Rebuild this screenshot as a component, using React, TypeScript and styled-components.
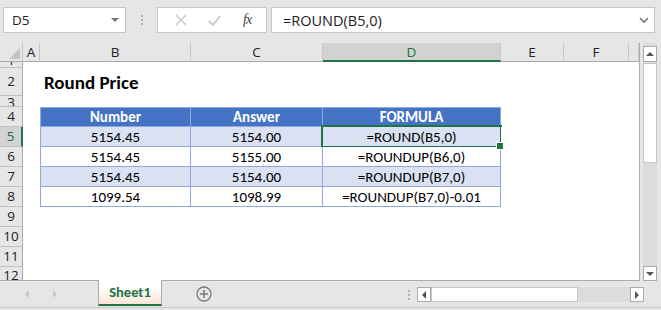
import React from 'react';
import styled, { createGlobalStyle } from 'styled-components';

const COLS = '23px 17px 151px 132px 178px 63px 65px 10px';
const UI_FONT = '"Open Sans", "Noto Sans", "DejaVu Sans", sans-serif';
const CELL_FONT = 'Calibri, Carlito, "Open Sans", "Liberation Sans", sans-serif';
const GREEN = '#217346';
const TABLE_LINE = '#8ea9db';

const GlobalStyle = createGlobalStyle`
  html, body {
    margin: 0;
    padding: 0;
    background: #e6e6e6;
  }
  * {
    box-sizing: border-box;
  }
`;

const Window = styled.div`
  width: 661px;
  height: 310px;
  display: flex;
  flex-direction: column;
  background: #e6e6e6;
  overflow: hidden;
  font-family: ${UI_FONT};
`;

const FormulaBar = styled.div`
  height: 43px;
  display: flex;
  align-items: flex-start;
  padding: 7px 6px 0 3px;
`;

const Box = styled.div<{ $w?: number }>`
  height: 26px;
  background: #fff;
  border: 1px solid #c6c6c6;
  display: flex;
  align-items: center;
  ${p => (p.$w ? `width: ${p.$w}px;` : 'flex: 1;')}
`;

const NameText = styled.span`
  flex: 1;
  padding-left: 8px;
  font-size: 13.5px;
  color: #222;
`;

const FormulaText = styled.span`
  flex: 1;
  padding-left: 11px;
  font-size: 14.5px;
  color: #222;
`;

const Grip = styled.div`
  width: 31px;
  height: 26px;
  display: flex;
  flex-direction: column;
  align-items: center;
  justify-content: center;
  gap: 2px;
  i {
    width: 2px;
    height: 2px;
    background: #b4b4b4;
  }
`;

const IconBox = styled(Box)`
  justify-content: space-around;
  padding: 0 4px 0 6px;
  margin-right: 4px;
`;

const Fx = styled.span`
  font-family: "Liberation Serif", "DejaVu Serif", serif;
  font-style: italic;
  font-size: 14px;
  color: #444;
  letter-spacing: -1px;
`;

const Middle = styled.div`
  display: flex;
  height: 238px;
`;

const Sheet = styled.div`
  width: 640px;
  background: #fff;
  border-right: 1px solid #ababab;
  border-bottom: 1px solid #ababab;
  overflow: hidden;
`;

const Row = styled.div<{ $h: number }>`
  display: grid;
  grid-template-columns: ${COLS};
  height: ${p => p.$h}px;
`;

const ColHead = styled.div<{ $active?: boolean }>`
  height: 19px;
  display: flex;
  align-items: center;
  justify-content: center;
  font-size: 13.5px;
  color: ${p => (p.$active ? GREEN : '#222')};
  background: ${p => (p.$active ? '#d2d2d2' : '#e6e6e6')};
  border-right: 1px solid #c8c8c8;
  border-bottom: ${p => (p.$active ? `2px solid ${GREEN}` : '1px solid #ababab')};
  position: relative;
  overflow: hidden;
`;

const CornerMark = styled.svg`
  position: absolute;
  right: 2px;
  bottom: 2px;
`;

const RowHead = styled.div<{ $active?: boolean; $align?: string }>`
  display: flex;
  align-items: ${p => p.$align ?? 'center'};
  justify-content: center;
  overflow: hidden;
  font-size: 13.5px;
  line-height: 1;
  color: ${p => (p.$active ? GREEN : '#222')};
  background: ${p => (p.$active ? '#d2d2d2' : '#e6e6e6')};
  border-bottom: 1px solid #c0c0c0;
  border-right: ${p => (p.$active ? `2px solid ${GREEN}` : '1px solid #ababab')};
`;

type Kind = 'none' | 'head' | 'band' | 'plain';

const Cell = styled.div<{ $kind?: Kind; $left?: boolean; $top?: boolean; $sel?: boolean }>`
  display: flex;
  align-items: center;
  justify-content: center;
  position: relative;
  white-space: nowrap;
  font-family: ${CELL_FONT};
  font-size: 15px;
  color: ${p => (p.$kind === 'head' ? '#fff' : '#000')};
  font-weight: ${p => (p.$kind === 'head' ? 700 : 400)};
  background: ${p =>
    p.$kind === 'head' ? '#4472c4' : p.$kind === 'band' ? '#d9e1f2' : '#fff'};
  ${p =>
    p.$kind && p.$kind !== 'none'
      ? `border-right: 1px solid ${TABLE_LINE}; border-bottom: 1px solid ${TABLE_LINE};`
      : ''}
  ${p => (p.$left ? `border-left: 1px solid ${TABLE_LINE};` : '')}
  ${p => (p.$top ? `border-top: 1px solid ${TABLE_LINE};` : '')}
  ${p =>
    p.$sel
      ? `&::after {
          content: '';
          position: absolute;
          left: -2px; top: -2px; right: -2px; bottom: -2px;
          border: 2px solid ${GREEN};
        }
        &::before {
          content: '';
          position: absolute;
          right: -4px; bottom: -4px;
          width: 6px; height: 6px;
          background: ${GREEN};
          border: 1px solid #fff;
          z-index: 2;
        }`
      : ''}
`;

const Title = styled.div`
  grid-column: 3 / span 3;
  display: flex;
  align-items: center;
  padding-left: 4px;
  font-family: ${CELL_FONT};
  font-weight: 700;
  font-size: 19px;
  color: #000;
`;

const VScroll = styled.div`
  width: 14px;
  margin: 0 0 0 3px;
  display: flex;
  flex-direction: column;
  background: #dcdcdc;
  padding-top: 3px;
`;

const ScrollBtn = styled.div<{ $h?: number }>`
  width: 14px;
  height: ${p => p.$h ?? 14}px;
  background: #fff;
  border: 1px solid #ababab;
  display: flex;
  align-items: center;
  justify-content: center;
  flex-shrink: 0;
`;

const VThumb = styled.div`
  height: 100px;
  background: #fff;
  border: 1px solid #c6c6c6;
  margin-top: 1px;
`;

const Spacer = styled.div`
  flex: 1;
`;

const TabBar = styled.div`
  height: 27px;
  display: flex;
  align-items: stretch;
  border-bottom: 1px solid #c8c8c8;
`;

const Nav = styled.div`
  width: 98px;
  display: flex;
  align-items: center;
  padding-left: 24px;
  gap: 22px;
`;

const SheetTab = styled.div`
  width: 64px;
  margin-top: -1px;
  display: flex;
  align-items: center;
  justify-content: center;
  font-family: ${CELL_FONT};
  font-weight: 700;
  font-size: 14.5px;
  color: ${GREEN};
  background: linear-gradient(#ffffff 30%, #fbe5d6);
  border-left: 1px solid #ababab;
  border-right: 1px solid #ababab;
  border-bottom: 2px solid ${GREEN};
  margin-bottom: 1px;
`;

const AddSheet = styled.div`
  width: 84px;
  display: flex;
  align-items: center;
  justify-content: center;
`;

const BottomGrip = styled(Grip)`
  width: 17px;
  height: 27px;
  margin-left: 154px;
`;

const HScroll = styled.div`
  width: 227px;
  height: 15px;
  margin-top: 6px;
  display: flex;
  background: #dcdcdc;
`;

const HThumb = styled.div`
  width: 147px;
  background: #fff;
  border: 1px solid #c6c6c6;
`;

const Tri = ({ dir, c = '#444' }: { dir: 'up' | 'down' | 'left' | 'right'; c?: string }) => {
  const pts = {
    up: '0,5 4,1 8,5',
    down: '0,1 8,1 4,5',
    left: '5,0 5,8 1,4',
    right: '1,0 1,8 5,4',
  }[dir];
  const w = dir === 'up' || dir === 'down' ? 8 : 6;
  const h = dir === 'up' || dir === 'down' ? 6 : 8;
  return (
    <svg width={w} height={h} viewBox={`0 0 ${w} ${h}`}>
      <polygon points={pts} fill={c} />
    </svg>
  );
};

const COL_LETTERS = ['A', 'B', 'C', 'D', 'E', 'F', ''];

const DATA = [
  ['5154.45', '5154.00', '=ROUND(B5,0)'],
  ['5154.45', '5155.00', '=ROUNDUP(B6,0)'],
  ['5154.45', '5154.00', '=ROUNDUP(B7,0)'],
  ['1099.54', '1098.99', '=ROUNDUP(B7,0)-0.01'],
];

const EmptyCells = ({ n }: { n: number }) => (
  <>
    {Array.from({ length: n }).map((_, i) => (
      <Cell key={i} />
    ))}
  </>
);

export default function App() {
  return (
    <>
      <GlobalStyle />
      <Window>
        <FormulaBar>
          <Box $w={123}>
            <NameText>D5</NameText>
            <span style={{ paddingRight: 6, display: 'flex' }}>
              <Tri dir="down" c="#777" />
            </span>
          </Box>
          <Grip>
            <i />
            <i />
            <i />
          </Grip>
          <IconBox $w={110}>
            <svg width="12" height="12" viewBox="0 0 12 12">
              <path d="M1 1 L11 11 M11 1 L1 11" stroke="#c4c4c4" strokeWidth="1.4" />
            </svg>
            <svg width="13" height="11" viewBox="0 0 13 11">
              <path d="M1 6 L5 10 L12 1" stroke="#c4c4c4" strokeWidth="1.6" fill="none" />
            </svg>
            <Fx>fx</Fx>
          </IconBox>
          <Box>
            <FormulaText>=ROUND(B5,0)</FormulaText>
            <svg width="10" height="7" viewBox="0 0 10 7" style={{ marginRight: 5 }}>
              <path d="M1 1 L5 5 L9 1" stroke="#777" strokeWidth="1.6" fill="none" />
            </svg>
          </Box>
        </FormulaBar>

        <Middle>
          <Sheet>
            <Row $h={19}>
              <ColHead>
                <CornerMark width="11" height="11" viewBox="0 0 11 11">
                  <polygon points="11,0 11,11 0,11" fill="#c3c3c3" />
                </CornerMark>
              </ColHead>
              {COL_LETTERS.map((l, i) => (
                <ColHead key={i} $active={l === 'D'}>
                  {l}
                </ColHead>
              ))}
            </Row>
            <Row $h={6}>
              <RowHead $align="flex-end">1</RowHead>
              <EmptyCells n={7} />
            </Row>
            <Row $h={28}>
              <RowHead>2</RowHead>
              <Cell />
              <Title>Round Price</Title>
              <EmptyCells n={3} />
            </Row>
            <Row $h={11}>
              <RowHead $align="flex-start">3</RowHead>
              <EmptyCells n={7} />
            </Row>
            <Row $h={20}>
              <RowHead>4</RowHead>
              <Cell />
              <Cell $kind="head" $left $top>Number</Cell>
              <Cell $kind="head" $top>Answer</Cell>
              <Cell $kind="head" $top>FORMULA</Cell>
              <EmptyCells n={3} />
            </Row>
            {DATA.map((r, i) => (
              <Row key={i} $h={20}>
                <RowHead $active={i === 0}>{i + 5}</RowHead>
                <Cell />
                <Cell $kind={i % 2 === 0 ? 'band' : 'plain'} $left>{r[0]}</Cell>
                <Cell $kind={i % 2 === 0 ? 'band' : 'plain'}>{r[1]}</Cell>
                <Cell $kind={i % 2 === 0 ? 'band' : 'plain'} $sel={i === 0}>{r[2]}</Cell>
                <EmptyCells n={3} />
              </Row>
            ))}
            {[9, 10, 11].map(n => (
              <Row key={n} $h={20}>
                <RowHead>{n}</RowHead>
                <EmptyCells n={7} />
              </Row>
            ))}
            <Row $h={20}>
              <RowHead $align="flex-start" style={{ paddingTop: 2 }}>12</RowHead>
              <EmptyCells n={7} />
            </Row>
          </Sheet>
          <VScroll>
            <ScrollBtn $h={16}>
              <Tri dir="up" c="#555" />
            </ScrollBtn>
            <VThumb />
            <Spacer />
            <ScrollBtn $h={15}>
              <Tri dir="down" c="#555" />
            </ScrollBtn>
          </VScroll>
        </Middle>

        <TabBar>
          <Nav>
            <Tri dir="left" c="#c8c8c8" />
            <Tri dir="right" c="#c8c8c8" />
          </Nav>
          <SheetTab>Sheet1</SheetTab>
          <AddSheet>
            <svg width="16" height="16" viewBox="0 0 16 16">
              <circle cx="8" cy="8" r="7" stroke="#7a7a7a" strokeWidth="1.3" fill="none" />
              <path d="M8 4 V12 M4 8 H12" stroke="#7a7a7a" strokeWidth="1.6" />
            </svg>
          </AddSheet>
          <BottomGrip>
            <i />
            <i />
            <i />
          </BottomGrip>
          <HScroll>
            <ScrollBtn $h={15}>
              <Tri dir="left" c="#555" />
            </ScrollBtn>
            <HThumb />
            <Spacer />
            <ScrollBtn $h={15}>
              <Tri dir="right" c="#555" />
            </ScrollBtn>
          </HScroll>
        </TabBar>
      </Window>
    </>
  );
}
